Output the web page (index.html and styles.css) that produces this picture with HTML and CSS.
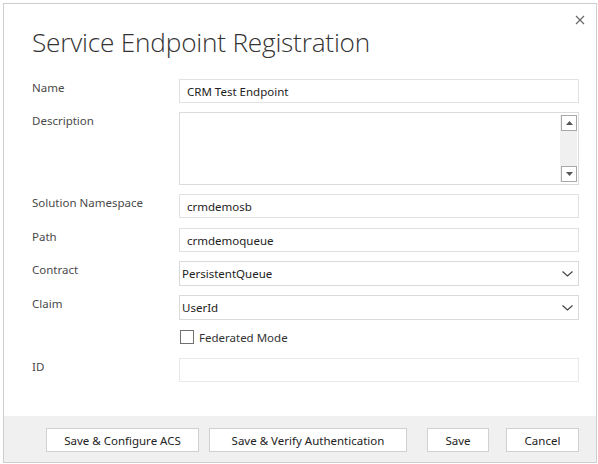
FILE: index.html
```html
<!DOCTYPE html>
<html>
<head>
<meta charset="utf-8">
<link rel="stylesheet" href="styles.css">
</head>
<body>
<div class="dialog">
  <div class="close" aria-label="Close">
    <svg width="10" height="10" viewBox="0 0 10 10"><path d="M1 1 L9 9 M9 1 L1 9" stroke="#666" stroke-width="1.1" fill="none"/></svg>
  </div>
  <div class="content">
    <h1 class="title">Service Endpoint Registration</h1>
    <div class="row">
      <div class="label">Name</div>
      <div class="input text">CRM Test Endpoint</div>
    </div>
    <div class="row">
      <div class="label">Description</div>
      <div class="textarea">
        <div class="ta-body"></div>
        <div class="scrollbar">
          <div class="sb-btn"><svg width="7" height="4" viewBox="0 0 7 4"><path d="M0 4 L3.5 0 L7 4 Z" fill="#555"/></svg></div>
          <div class="sb-track"></div>
          <div class="sb-btn"><svg width="7" height="4" viewBox="0 0 7 4"><path d="M0 0 L3.5 4 L7 0 Z" fill="#555"/></svg></div>
        </div>
      </div>
    </div>
    <div class="row sn-row">
      <div class="label">Solution Namespace</div>
      <div class="input text">crmdemosb</div>
    </div>
    <div class="row">
      <div class="label">Path</div>
      <div class="input text">crmdemoqueue</div>
    </div>
    <div class="row">
      <div class="label">Contract</div>
      <div class="input select"><span>PersistentQueue</span>
        <svg class="chev" width="11" height="6" viewBox="0 0 11 6"><path d="M0.5 0.5 L5.5 5 L10.5 0.5" stroke="#444" stroke-width="1.2" fill="none"/></svg>
      </div>
    </div>
    <div class="row">
      <div class="label">Claim</div>
      <div class="input select"><span>UserId</span>
        <svg class="chev" width="11" height="6" viewBox="0 0 11 6"><path d="M0.5 0.5 L5.5 5 L10.5 0.5" stroke="#444" stroke-width="1.2" fill="none"/></svg>
      </div>
    </div>
    <div class="row check-row">
      <div class="label"></div>
      <div class="check"><span class="box"></span><span>Federated Mode</span></div>
    </div>
    <div class="row">
      <div class="label">ID</div>
      <div class="input text id"></div>
    </div>
  </div>
  <div class="footer">
    <div class="btn b1">Save &amp; Configure ACS</div>
    <div class="btn b2">Save &amp; Verify Authentication</div>
    <div class="btn b3">Save</div>
    <div class="btn b4">Cancel</div>
  </div>
</div>
</body>
</html>
```
FILE: styles.css
```css
* { box-sizing: border-box; }
html, body { margin: 0; padding: 0; background: #fff; }
body {
  font-family: "Noto Sans", "Open Sans", sans-serif;
  font-size: 11.5px;
  color: #333;
}
.dialog {
  position: relative;
  margin: 3px 0 0 3px;
  width: 594px;
  height: 460px;
  border: 1px solid #cdcdcd;
  display: flex;
  flex-direction: column;
  background: #fff;
}
.close {
  position: absolute;
  top: 11px;
  right: 11px;
  width: 10px;
  height: 10px;
  display: flex;
}
.content {
  flex: 1;
  padding: 0 17px 0 28px;
}
.title {
  margin: 21px 0 0 0;
  font-family: "Open Sans", sans-serif;
  font-weight: 300;
  font-size: 26.2px;
  line-height: 34px;
  color: #333;
  letter-spacing: -0.2px;
}
.row {
  display: flex;
  margin-bottom: 9px;
}
.title + .row { margin-top: 20px; }
.sn-row { margin-bottom: 10px; }
.label {
  width: 147px;
  flex: none;
  padding-top: 1px;
  color: #4a4a4a;
  line-height: 16px;
}
.input {
  flex: 1;
  height: 24px;
  border: 1px solid #e1e1e1;
  display: flex;
  align-items: center;
  color: #222;
}
.input.text { padding-left: 7px; }
.input.select { padding-left: 2px; justify-content: space-between; padding-right: 5px; height: 25px; border-color: #dadada; }
.input.id { border-color: #e8e8e8; }
.chev { margin-top: 1px; }
.textarea {
  flex: 1;
  height: 73px;
  border: 1px solid #dcdcdc;
  display: flex;
  padding: 2px 1px 2px 0;
}
.ta-body { flex: 1; }
.scrollbar {
  width: 17px;
  display: flex;
  flex-direction: column;
  background: #f0f0f0;
}
.sb-btn {
  height: 16px;
  width: 16px;
  margin-left: 1px;
  border: 1px solid #a8a8a8;
  background: #fff;
  display: flex;
  align-items: center;
  justify-content: center;
}
.sb-track { flex: 1; }
.check-row { margin-top: 4px; margin-bottom: 13px; }
.check {
  display: flex;
  align-items: center;
  height: 16px;
  color: #333;
}
.box {
  width: 14px;
  height: 14px;
  border: 1px solid #707070;
  margin-left: 1px;
  margin-right: 5px;
  background: #fff;
}
.footer {
  height: 46px;
  background: #f0f0f0;
  display: flex;
  align-items: flex-start;
  padding: 12px 0 0 42px;
}
.btn {
  height: 24px;
  border: 1px solid #d0d0d0;
  background: #fff;
  display: flex;
  align-items: center;
  justify-content: center;
  color: #222;
}
.b1 { width: 153px; }
.b2 { width: 198px; margin-left: 10px; }
.b3 { width: 62px; margin-left: 20px; }
.b4 { width: 73px; margin-left: 17px; }
```
